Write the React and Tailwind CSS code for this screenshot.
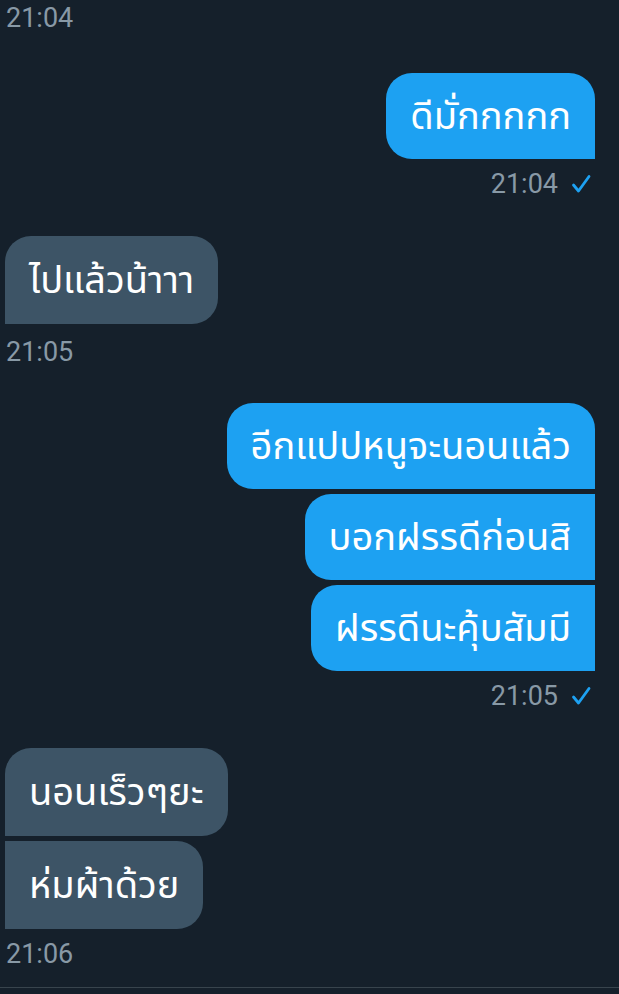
import React from 'react';

const font = { fontFamily: 'Roboto, "Noto Sans", "Noto Sans Thai", sans-serif' };

function Check() {
  return (
    <svg width="20" height="20" viewBox="0 0 20 20" className="ml-[13px]">
      <path d="M2.5 11 L7.5 17 L18 2.5" fill="none" stroke="#1da1f2" strokeWidth="2.8" strokeLinecap="round" strokeLinejoin="round" />
    </svg>
  );
}

function Stamp({ time, mine, className = '' }) {
  return (
    <div className={`flex items-center h-[24px] text-[27px] leading-[24px] text-[#8899a6] ${mine ? 'justify-end pr-[28px]' : 'pl-[6px]'} ${className}`}>
      <span>{time}</span>
      {mine && <Check />}
    </div>
  );
}

function Bubble({ text, mine, corner, h = 'h-[86px]' }) {
  const color = mine ? 'bg-[#1da1f2]' : 'bg-[#3d5466]';
  return (
    <div className={`${color} ${corner} ${h} flex items-center px-[24px] text-[38px] text-white whitespace-nowrap`}>
      {text}
    </div>
  );
}

export default function App() {
  return (
    <div style={font} className="bg-[#15202b] w-[619px] h-[994px] overflow-hidden flex flex-col">
      <Stamp time="21:04" className="mt-[6px]" />

      <div className="flex justify-end pr-[24px] mt-[43px]">
        <Bubble mine text="ดีมั่กกกกก" corner="rounded-[26px] rounded-br-none" />
      </div>
      <Stamp mine time="21:04" className="mt-[13px]" />

      <div className="flex justify-start pl-[5px] mt-[40px]">
        <Bubble text="ไปแล้วน้าาา" corner="rounded-[26px] rounded-bl-none" h="h-[88px]" />
      </div>
      <Stamp time="21:05" className="mt-[16px]" />

      <div className="flex flex-col items-end gap-[5px] pr-[24px] mt-[39px]">
        <Bubble mine text="อีกแปปหนูจะนอนแล้ว" corner="rounded-[26px] rounded-br-none" />
        <Bubble mine text="บอกฝรรดีก่อนสิ" corner="rounded-l-[26px]" />
        <Bubble mine text="ฝรรดีนะคุ้บสัมมี" corner="rounded-l-[26px]" />
      </div>
      <Stamp mine time="21:05" className="mt-[13px]" />

      <div className="flex flex-col items-start gap-[5px] pl-[5px] mt-[40px]">
        <Bubble text="นอนเร็วๆยะ" corner="rounded-[26px] rounded-bl-none" h="h-[88px]" />
        <Bubble text="ห่มผ้าด้วย" corner="rounded-r-[26px]" h="h-[88px]" />
      </div>
      <Stamp time="21:06" className="mt-[13px]" />

      <div className="h-px bg-[#38444d] mt-[21px]" />
    </div>
  );
}
